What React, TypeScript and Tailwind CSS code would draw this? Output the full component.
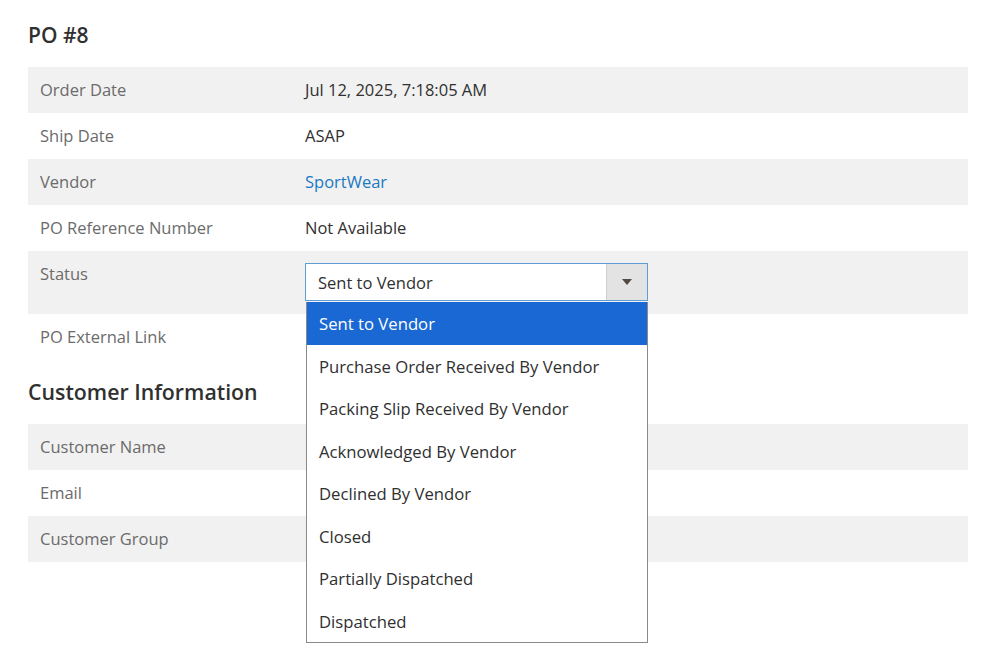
import React from 'react';

const font = { fontFamily: '"Open Sans", "Liberation Sans", sans-serif' };

type Row = { label: string; value?: React.ReactNode };

const Table = ({ rows }: { rows: Row[] }) => (
  <table className="w-full border-collapse">
    <tbody>
      {rows.map((row, i) => (
        <tr key={row.label} className={i % 2 === 0 ? 'bg-[#f1f1f1]' : 'bg-white'}>
          <th className="w-[265px] px-3 py-3 text-left align-top text-[16.5px] font-normal leading-[22px] text-[#6b6b6b]">
            {row.label}
          </th>
          <td className="px-3 py-3 align-top text-[16.5px] leading-[22px] text-[#303030]">{row.value}</td>
        </tr>
      ))}
    </tbody>
  </table>
);

const options = [
  'Sent to Vendor',
  'Purchase Order Received By Vendor',
  'Packing Slip Received By Vendor',
  'Acknowledged By Vendor',
  'Declined By Vendor',
  'Closed',
  'Partially Dispatched',
  'Dispatched',
];

const StatusSelect = () => (
  <div className="relative w-[343px]">
    <div className="flex h-[38px] border border-[#5e9ed6] bg-white">
      <div className="flex flex-1 items-center pl-3 pt-[2px] text-[16.5px] text-[#303030]">Sent to Vendor</div>
      <div className="flex w-[41px] items-center justify-center border-l border-[#cfcfcf] bg-[#e3e3e3]">
        <svg width="10" height="6" viewBox="0 0 10 6">
          <path d="M0 0h10L5 6z" fill="#514943" />
        </svg>
      </div>
    </div>
    <ul className="absolute left-[1px] top-[39px] z-10 w-[342px] border border-[#8a8a8a] border-t-0 bg-white">
      {options.map((opt, i) => (
        <li
          key={opt}
          className={`flex h-[42.5px] items-center px-3 pt-[2px] text-[16.7px] ${
            i === 0 ? 'bg-[#1a68d4] text-white' : 'text-[#303030]'
          }`}
        >
          {opt}
        </li>
      ))}
    </ul>
  </div>
);

export default function App() {
  return (
    <div className="min-h-[658px] bg-white pl-7 pr-8 pt-[20px]" style={font}>
      <h2 className="mb-[17px] text-[21px] font-semibold leading-[30px] text-[#303030]">PO #8</h2>
      <Table
        rows={[
          { label: 'Order Date', value: 'Jul 12, 2025, 7:18:05 AM' },
          { label: 'Ship Date', value: 'ASAP' },
          { label: 'Vendor', value: <a className="text-[#1979c3]">SportWear</a> },
          { label: 'PO Reference Number', value: 'Not Available' },
          { label: 'Status', value: <div className="pb-[1px]"><StatusSelect /></div> },
          { label: 'PO External Link', value: '' },
        ]}
      />
      <h2 className="mb-[17px] mt-[17px] text-[21.3px] font-semibold leading-[30px] text-[#303030]">
        Customer Information
      </h2>
      <Table
        rows={[
          { label: 'Customer Name', value: '' },
          { label: 'Email', value: '' },
          { label: 'Customer Group', value: '' },
        ]}
      />
    </div>
  );
}
